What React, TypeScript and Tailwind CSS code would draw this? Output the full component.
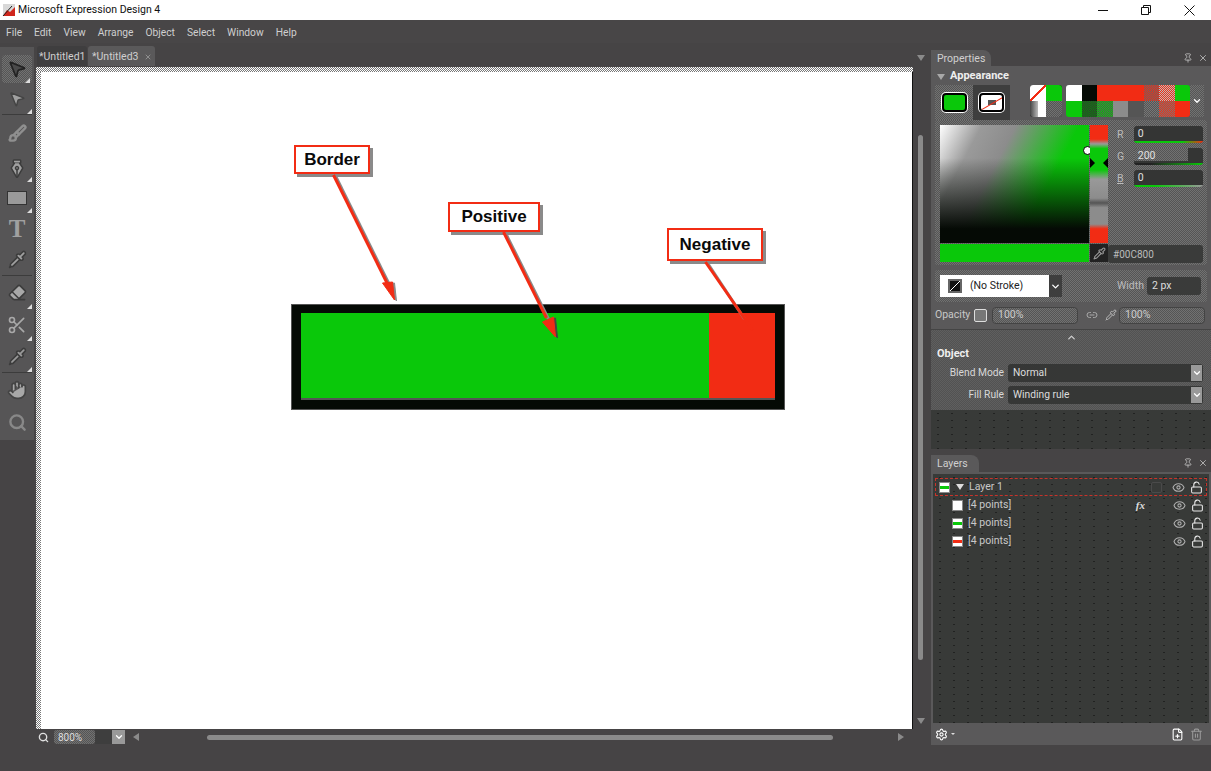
import { Eraser, Hand, MousePointer2, PenTool, Pipette, Scissors, Search, Settings, Trash2, FilePlus, Eye, LockOpen, Pin, X, Link2, Brush, ChevronDown, ChevronUp } from 'lucide-react'

const menus = ['File', 'Edit', 'View', 'Arrange', 'Object', 'Select', 'Window', 'Help']

const checker = 'bg-[repeating-conic-gradient(#727272_0_25%,#555555_0_50%)] bg-[length:2px_2px]'
const rulerBg = 'bg-[repeating-conic-gradient(#ffffff_0_25%,#777777_0_50%)] bg-[length:2px_2px]'
const darkDots = 'bg-[#383a38] bg-[radial-gradient(#0a0a0a_0.45px,#0000_0.55px)] bg-[length:14px_7px]'
const font = 'font-["Roboto","Noto_Sans",sans-serif]'

function ToolCorner() {
  return <span className="absolute bottom-0 right-[2px] h-0 w-0 border-b-[5px] border-l-[5px] border-b-[#dddddd] border-l-transparent" />
}

function Tool({ children, corner, active, h = 31 }: { children: React.ReactNode; corner?: boolean; active?: boolean; h?: number }) {
  return (
    <div
      style={{ height: h }}
      className={`relative flex items-center justify-center text-[#3c3c3c] ${active ? `${checker} mx-[2px] rounded-sm` : ''}`}
    >
      {children}
      {corner && <ToolCorner />}
    </div>
  )
}

function Slider({ label, value, fill, bar, underline }: { label: string; value: string; fill?: boolean; bar: string; underline?: boolean }) {
  return (
    <div className="flex h-[17px] items-center">
      <span className={`w-[23px] pl-[6px] text-[10.5px] text-[#bbbbbb] ${underline ? 'underline' : ''}`}>{label}</span>
      <div className="relative h-[17px] w-[70px] overflow-hidden rounded-[3px] bg-[#343534]">
        {fill && <div className={`absolute left-0 top-0 h-[13px] w-[54px] ${checker}`} />}
        <span className="absolute left-1 top-0 text-[10.5px] leading-[16px] text-[#e0e0e0]">{value}</span>
        <div className={`absolute bottom-0 left-0 h-[2px] w-full ${bar}`} />
      </div>
    </div>
  )
}

function Field({ label, value }: { label: string; value: string }) {
  return (
    <div className="flex h-[18px] items-center">
      <span className="w-[71px] pr-1 text-right text-[10.25px] text-[#d8d8d8]">{label}</span>
      <div className="flex h-[18px] w-[195px] items-center justify-between rounded-[3px] bg-[#363736] pl-[5px] pr-px">
        <span className="text-[10.25px] text-[#dddddd]">{value}</span>
        <span className="flex h-[16px] w-[11px] items-center justify-center bg-[#999999]">
          <ChevronDown size={10} strokeWidth={3} className="text-white" />
        </span>
      </div>
    </div>
  )
}

function LayerThumb({ color, className }: { color: string; className: string }) {
  return (
    <span className={`flex h-[11px] w-[11px] items-center border border-[#888888] bg-white ${className}`}>
      <span className={`h-[3px] w-full ${color}`} />
    </span>
  )
}

function LayerRow({ thumb, children, fx, selected }: { thumb: React.ReactNode; children: React.ReactNode; fx?: boolean; selected?: boolean }) {
  return (
    <div className={`relative flex h-[18px] items-center ${selected ? 'border border-dashed border-[#c8332a]' : ''}`}>
      {thumb}
      {children}
      {selected && <span className="absolute right-[44px] top-[3px] h-[11px] w-[11px] rounded-[2px] border border-[#4a4a4a]" />}
      {fx && <span className="absolute right-[62px] font-['Liberation_Serif',serif] text-[11px] font-bold italic text-[#dddddd]">fx</span>}
      <Eye size={13} className="absolute right-[21px] text-[#b0b0b0]" />
      <LockOpen size={13} className="absolute right-[3px] text-[#e8e8e8]" />
    </div>
  )
}

function Callout({ text, className }: { text: string; className: string }) {
  return (
    <div className={`absolute flex items-center justify-center border-2 border-[#f22c14] bg-white font-['Liberation_Sans',sans-serif] text-[17px] font-bold text-[#0a0a0a] shadow-[3px_3px_0_#8a8a8a] ${className}`}>
      {text}
    </div>
  )
}

function PanelButtons() {
  return (
    <div className="absolute right-[3px] top-[3px] flex items-center gap-[5px] text-[#c0c0c0]">
      <Pin size={10} />
      <X size={10} />
    </div>
  )
}

const swatchesTop = [
  'bg-white',
  'bg-[#050a05]',
  'bg-[#f22c14]',
  'bg-[#f22c14]',
  'bg-[#f22c14]',
  'bg-[repeating-conic-gradient(#f22c14_0_25%,#666666_0_50%)] bg-[length:2px_2px]',
  'bg-[repeating-conic-gradient(#f22c14_0_25%,#bbbbbb_0_50%)] bg-[length:2px_2px]',
  'bg-[#0ac80a]',
]
const swatchesBottom = [
  'bg-[#0ac80a]',
  'bg-[repeating-conic-gradient(#0a8a0a_0_25%,#333333_0_50%)] bg-[length:2px_2px]',
  'bg-[repeating-conic-gradient(#0ac80a_0_25%,#555555_0_50%)] bg-[length:2px_2px]',
  'bg-[#8c8c8c]',
  'bg-[#555555]',
  'bg-[repeating-conic-gradient(#777777_0_25%,#555555_0_50%)] bg-[length:2px_2px]',
  'bg-[repeating-conic-gradient(#f22c14_0_25%,#777777_0_50%)] bg-[length:2px_2px]',
  'bg-[#f22c14]',
]

export default function App() {
  return (
    <div className={`flex h-[771px] w-[1211px] flex-col overflow-hidden bg-[#464445] ${font}`}>
      {/* title bar */}
      <div className="flex h-5 shrink-0 items-center bg-white">
        <svg width="14" height="14" viewBox="0 0 14 14" className="ml-[2px]">
          <rect x="1" y="1" width="12" height="12" fill="#d8d8d8" />
          <path d="M1 13 L5 7 L8 9 L13 4 V13 Z" fill="#d0261c" />
          <path d="M1 13 L10 3" stroke="#222" strokeWidth="1" />
        </svg>
        <span className="ml-[2px] text-[10.5px] text-[#111111]">Microsoft Expression Design 4</span>
        <div className="ml-auto flex items-center text-[#111111]">
          <svg width="10" height="10" viewBox="0 0 10 10" className="mr-[33px]"><path d="M0 5.5H10" stroke="currentColor" /></svg>
          <svg width="10" height="10" viewBox="0 0 10 10" className="mr-[33px]"><path d="M0.5 2.5H7.5V9.5H0.5ZM2.5 2.5V0.5H9.5V7.5H7.5" fill="none" stroke="currentColor" /></svg>
          <svg width="11" height="11" viewBox="0 0 11 11" className="mr-[16px]"><path d="M0.5 0.5L10.5 10.5M10.5 0.5L0.5 10.5" stroke="currentColor" /></svg>
        </div>
      </div>

      {/* menu bar */}
      <div className="flex h-[23px] shrink-0 items-center gap-3 bg-[#484647] pl-[6px] pt-[3px] text-[10.25px] text-[#cfcfcf]">
        {menus.map((m) => (
          <span key={m}>{m}</span>
        ))}
      </div>

      <div className="flex h-[702px] shrink-0">
        {/* tools */}
        <div className="mt-1 flex h-[393px] w-[34px] shrink-0 flex-col bg-[#565556] pt-2">
          <Tool active corner h={28}>
            <MousePointer2 size={20} fill="#4a4a4a" className="text-[#222222]" />
          </Tool>
          <Tool corner h={31}>
            <MousePointer2 size={18} fill="#a0a0a0" className="text-[#444444]" />
          </Tool>
          <div className="mx-[2px] h-px bg-[#3c3c3c]" />
          <Tool h={36}><Brush size={19} strokeWidth={3} className="text-[#8f8f8f]" /></Tool>
          <Tool corner h={31}><PenTool size={18} fill="#a0a0a0" className="rotate-[225deg]" /></Tool>
          <Tool corner h={31}>
            <span className="h-[14px] w-5 border border-[#333333] bg-[#9a9a9a]" />
          </Tool>
          <Tool h={31}>
            <span className="font-['Liberation_Serif',serif] text-[25px] font-bold leading-none text-[#a0a0a0]">T</span>
          </Tool>
          <Tool h={31}><Pipette size={19} fill="#a0a0a0" /></Tool>
          <div className="mx-[2px] h-px bg-[#3c3c3c]" />
          <Tool corner h={33}><Eraser size={19} fill="#a8a8a8" /></Tool>
          <Tool corner h={32}><Scissors size={20} className="text-[#a8a8a8]" /></Tool>
          <Tool corner h={31}><Pipette size={19} fill="#999999" /></Tool>
          <div className="mx-[2px] h-px bg-[#3c3c3c]" />
          <Tool h={34}><Hand size={20} fill="#a8a8a8" className="text-[#444444]" /></Tool>
          <Tool h={31}><Search size={19} strokeWidth={3} className="text-[#888888]" /></Tool>
        </div>

        {/* document area */}
        <div className="flex w-[897px] shrink-0 flex-col">
          <div className="flex h-[23px] shrink-0 items-end pl-[3px] text-[10.5px] text-[#cfcfcf]">
            <span className="flex h-5 w-[50px] items-center rounded-t-[3px] bg-[#3f3e3f] pl-[2px] pt-[2px]">*Untitled1</span>
            <span className="ml-px flex h-5 w-[67px] items-center gap-[5px] rounded-t-[3px] bg-[#5a595a] pl-[4px] pt-[2px]">
              *Untitled3
              <X size={8} className="text-[#aaaaaa]" />
            </span>
            <div className="ml-auto mr-[6px] mb-[5px] h-0 w-0 border-x-[4px] border-t-[6px] border-x-transparent border-t-[#8a8a8a]" />
          </div>

          <div className="flex h-[663px] shrink-0">
            <div className="ml-[2px] mt-px flex w-[877px] flex-col">
              <div className={`h-[5px] shrink-0 ${rulerBg}`} />
              <div className="flex flex-1">
                <div className={`w-[5px] shrink-0 ${rulerBg}`} />
                <div className="relative flex-1 border-r border-[#111111] bg-white">
                  {/* drawing, offset from the canvas corner at 41,72 */}
                  <div className="absolute left-[250px] top-[232px] flex h-[106px] w-[494px] items-stretch bg-[#050a05] px-[10px] pb-[10px] pt-[9px] shadow-[inset_0_0_0_1px_#555555]">
                    <div className="w-[409px] border-b-2 border-[#555555] bg-[#0ac80a]" />
                    <div className="w-[66px] border-b-2 border-[#555555] bg-[#f22c14]" />
                  </div>
                  <Callout text="Border" className="left-[253px] top-[73px] h-[29px] w-[76px]" />
                  <Callout text="Positive" className="left-[407px] top-[130px] h-[30px] w-[92px]" />
                  <Callout text="Negative" className="left-[626px] top-[156px] h-[33px] w-[96px]" />
                  <svg className="pointer-events-none absolute inset-0 h-full w-full" viewBox="41 72 870 657">
                    <g fill="#8a8a8a" stroke="#8a8a8a" transform="translate(2 1)">
                      <path d="M333 175L388 286" strokeWidth="3" />
                      <path d="M382 283L392 282L394 300Z" />
                      <path d="M503 232L546 318" strokeWidth="3" />
                      <path d="M542 322L553 317L555 337Z" fill="#444444" stroke="#444444" />
                      <path d="M705 262L742 318" strokeWidth="3" />
                    </g>
                    <g fill="#f22c14" stroke="#f22c14">
                      <path d="M333 175L388 286" strokeWidth="3" />
                      <path d="M382 283L392 282L394 300Z" />
                      <path d="M503 232L546 318" strokeWidth="3" />
                      <path d="M542 322L553 317L555 337Z" />
                      <path d="M705 262L752 330" strokeWidth="3" />
                    </g>
                  </svg>
                </div>
              </div>
            </div>
            {/* vertical scrollbar */}
            <div className="relative w-[18px] shrink-0">
              <div className="absolute left-[5px] top-[69px] h-[525px] w-[5px] rounded-full bg-[#8a8a8a]" />
              <div className="absolute bottom-[5px] left-[4px] h-0 w-0 border-x-[4px] border-t-[6px] border-x-transparent border-t-[#8a8a8a]" />
            </div>
          </div>

          {/* status row */}
          <div className="flex h-4 shrink-0 items-center">
            <Search size={11} strokeWidth={3} className="ml-[4px] text-[#e0e0e0]" />
            <div className="ml-[5px] flex h-[14px] w-[71px] items-center">
              <span className={`flex h-[14px] w-[41px] items-center rounded-[3px] pl-1 text-[10px] text-[#dddddd] ${checker}`}>800%</span>
              <span className="h-[14px] w-[17px] bg-[#3e3e3e]" />
              <span className="flex h-[14px] w-[13px] items-center justify-center bg-[#999999]">
                <ChevronDown size={10} strokeWidth={3} className="text-white" />
              </span>
            </div>
            <div className="ml-[8px] h-0 w-0 border-y-[4px] border-r-[6px] border-y-transparent border-r-[#8a8a8a]" />
            <div className="ml-[68px] h-[5px] w-[626px] rounded-full bg-[#8a8a8a]" />
            <div className="ml-[65px] h-0 w-0 border-y-[4px] border-l-[6px] border-y-transparent border-l-[#8a8a8a]" />
          </div>
        </div>

        {/* right panels */}
        <div className="flex w-[280px] shrink-0 flex-col pt-[7px]">
          <div className="relative h-4 shrink-0">
            <div className="flex h-4 w-[60px] items-center rounded-tr-[8px] bg-[#5a595a] pl-[6px] pt-px text-[10.5px] text-[#d0d0d0]">Properties</div>
            <PanelButtons />
          </div>

          <div className="flex h-[344px] shrink-0 flex-col bg-[#5a595a]">
            <div className="flex h-[19px] shrink-0 items-center pl-[6px] pt-[2px]">
              <span className="h-0 w-0 border-x-[4px] border-t-[6px] border-x-transparent border-t-[#a8a8a8]" />
              <span className="ml-[5px] text-[11px] font-bold text-[#eeeeee]">Appearance</span>
            </div>

            <div className="flex h-[35px] shrink-0 pl-1">
              <div className={`flex w-[38px] items-center justify-center ${checker}`}>
                <span className="h-[19px] w-[25px] rounded-[4px] border-2 border-black bg-[#0ac80a] shadow-[0_0_0_1px_#ffffff]" />
              </div>
              <div className="flex w-[37px] items-center justify-center bg-[#3e3e3e]">
                <span className="relative h-[19px] w-[25px] overflow-hidden rounded-[4px] border-2 border-black bg-white shadow-[0_0_0_1px_#ffffff]">
                  <span className="absolute left-[7px] top-[5px] h-[5px] w-[8px] bg-[#555555]" />
                  <span className="absolute -left-[2px] top-[7px] h-px w-[30px] -rotate-[30deg] bg-[#f22c14]" />
                </span>
              </div>
              <div className="ml-[20px] grid h-[32px] w-[32px] grid-cols-2 grid-rows-2 overflow-hidden rounded-[3px] bg-black">
                <span className="bg-[linear-gradient(135deg,#ffffff_46%,#f22c14_46%,#f22c14_54%,#ffffff_54%)]" />
                <span className="bg-[#0ac80a]" />
                <span className="bg-[linear-gradient(to_right,#444444,#bbbbbb_50%,#ffffff_50%)]" />
                <span className={checker} />
              </div>
              <div className="ml-[4px] grid h-[32px] w-[124px] grid-cols-8 grid-rows-2 overflow-hidden rounded-[3px]">
                {[...swatchesTop, ...swatchesBottom].map((s, i) => (
                  <span key={i} className={s} />
                ))}
              </div>
              <span className={`flex h-[32px] w-[14px] items-center justify-center ${checker}`}>
                <ChevronDown size={10} strokeWidth={3} className="text-white" />
              </span>
            </div>

            {/* colour picker */}
            <div className={`ml-1 flex h-[145px] w-[272px] shrink-0 rounded-[3px] pl-[5px] pt-[5px] ${checker}`}>
              <div className="flex w-[168px] shrink-0 flex-col">
                <div className="flex h-[118px]">
                  <div className="relative h-[118px] w-[149px] bg-[linear-gradient(to_top,#050a05_12%,#0000_72%),linear-gradient(118deg,#ffffff_0%,#9a9a9a_20%,#8c8c8c_36%,#0ac80a_66%)]">
                    <span className="absolute right-[-3px] top-[21px] h-[9px] w-[9px] rounded-full border border-black bg-white" />
                  </div>
                  <div className="relative ml-px h-[118px] w-[18px] bg-[linear-gradient(to_bottom,#f22c14_12%,#999999_16%,#0ac80a_20%,#0ac80a_38%,#999999_46%,#8c8c8c_62%,#555555_66%,#8c8c8c_70%,#8c8c8c_84%,#f22c14_88%)]">
                    <span className="absolute left-0 top-[33px] h-0 w-0 border-y-[5px] border-l-[5px] border-y-transparent border-l-black" />
                    <span className="absolute right-0 top-[33px] h-0 w-0 border-y-[5px] border-r-[5px] border-y-transparent border-r-black" />
                  </div>
                </div>
                <div className="mt-px flex h-[18px]">
                  <div className="w-[149px] bg-[#0ac80a]" />
                  <div className="ml-px flex w-[18px] items-center justify-center bg-[#222222]">
                    <Pipette size={13} className="text-[#999999]" />
                  </div>
                </div>
              </div>
              <div className="flex w-[95px] shrink-0 flex-col">
                <div className="flex flex-col gap-[5px] pl-[3px] pt-px">
                  <Slider label="R" value="0" bar="bg-[linear-gradient(to_right,#0ac80a_70%,#f22c14)]" />
                  <Slider label="G" value="200" fill bar="bg-[linear-gradient(to_right,#222222_25%,#0ac80a)]" />
                  <Slider label="B" value="0" underline bar="bg-[linear-gradient(to_right,#0ac80a_30%,#999999)]" />
                </div>
                <div className="mt-[58px] flex h-[18px] items-center rounded-[3px] bg-[#3a3b3a] pl-[5px] text-[10px] text-[#bbbbbb]">#00C800</div>
              </div>
            </div>

            {/* stroke */}
            <div className={`ml-1 mt-[5px] flex h-[32px] w-[272px] shrink-0 items-center rounded-[3px] pl-[5px] ${checker}`}>
              <div className="flex h-[22px] w-[109px] items-center bg-white pl-2">
                <span className="h-[14px] w-[14px] border-2 border-[#666666] bg-[linear-gradient(135deg,#111111_48%,#ffffff_48%,#ffffff_52%,#111111_52%)]" />
                <span className="ml-2 text-[10.5px] text-[#222222]">(No Stroke)</span>
              </div>
              <span className="flex h-[22px] w-[13px] items-center justify-center bg-[#3e3e3e]">
                <ChevronDown size={11} strokeWidth={3} className="text-white" />
              </span>
              <span className="ml-[55px] w-[25px] text-[10.5px] text-[#bbbbbb]">Width</span>
              <span className="ml-[5px] flex h-[18px] w-[54px] items-center rounded-[3px] bg-[#3a3b3a] pl-[5px] text-[10.5px] text-[#dddddd]">2 px</span>
            </div>

            {/* opacity */}
            <div className="flex h-[23px] shrink-0 items-center pl-1 pt-[3px] text-[10.5px]">
              <span className="w-[39px] text-[#c8c8c8]">Opacity</span>
              <span className="h-[13px] w-[13px] rounded-[2px] border border-[#dddddd] bg-[#777777]" />
              <span className={`ml-[5px] flex h-[17px] w-[86px] items-center rounded-[4px] border border-[#444444] pl-[5px] text-[#cccccc] ${checker}`}>100%</span>
              <Link2 size={12} className="ml-[8px] text-[#aaaaaa]" />
              <Pipette size={12} className="ml-[7px] text-[#bbbbbb]" />
              <span className={`ml-[2px] flex h-[17px] w-[86px] items-center rounded-[4px] border border-[#444444] pl-[5px] text-[#cccccc] ${checker}`}>100%</span>
            </div>

            <div className="mt-[4px] flex flex-1 flex-col border-t border-[#444444] bg-[repeating-conic-gradient(#5f5f5f_0_25%,#525252_0_50%)] bg-[length:2px_2px] pl-[6px]">
              <div className="flex h-[14px] justify-center pr-[6px] text-[#cccccc]">
                <ChevronUp size={11} strokeWidth={3} className="mt-[2px]" />
              </div>
              <span className="mt-[2px] h-[16px] text-[11px] font-bold leading-[16px] text-[#eeeeee]">Object</span>
              <div className="mt-[2px] flex flex-col gap-1">
                <Field label="Blend Mode" value="Normal" />
                <Field label="Fill Rule" value="Winding rule" />
              </div>
            </div>
          </div>

          <div className={`h-[39px] shrink-0 ${darkDots}`} />

          <div className="relative mt-[6px] h-[17px] shrink-0">
            <div className="flex h-[17px] w-[48px] items-center rounded-tr-[8px] bg-[#5a595a] pl-[6px] pt-px text-[10.5px] text-[#d0d0d0]">Layers</div>
            <PanelButtons />
          </div>
          <div className="flex h-[273px] shrink-0 flex-col bg-[#5a595a] pt-[2px]">
            <div className={`mx-[2px] h-[249px] px-[2px] pt-[4px] text-[10.5px] text-[#c8c8c8] ${darkDots}`}>
              <LayerRow
                selected
                thumb={<LayerThumb color="bg-[#0ac80a]" className="ml-[3px]" />}
              >
                <span className="ml-[6px] h-0 w-0 border-x-[4px] border-t-[6px] border-x-transparent border-t-[#dddddd]" />
                <span className="ml-[5px]">Layer 1</span>
              </LayerRow>
              <LayerRow fx thumb={<LayerThumb color="bg-white" className="ml-[17px]" />}>
                <span className="ml-[5px]">[4 points]</span>
              </LayerRow>
              <LayerRow thumb={<LayerThumb color="bg-[#0ac80a]" className="ml-[17px]" />}>
                <span className="ml-[5px]">[4 points]</span>
              </LayerRow>
              <LayerRow thumb={<LayerThumb color="bg-[#f22c14]" className="ml-[17px]" />}>
                <span className="ml-[5px]">[4 points]</span>
              </LayerRow>
            </div>
            <div className="flex flex-1 items-center pl-[4px] pr-[8px]">
              <Settings size={13} className="text-white" />
              <span className="ml-[3px] h-0 w-0 border-x-[2px] border-t-[2px] border-x-transparent border-t-[#dddddd]" />
              <FilePlus size={13} className="ml-auto text-white" />
              <Trash2 size={13} className="ml-[6px] text-[#999999]" />
            </div>
          </div>
        </div>
      </div>
    </div>
  )
}
